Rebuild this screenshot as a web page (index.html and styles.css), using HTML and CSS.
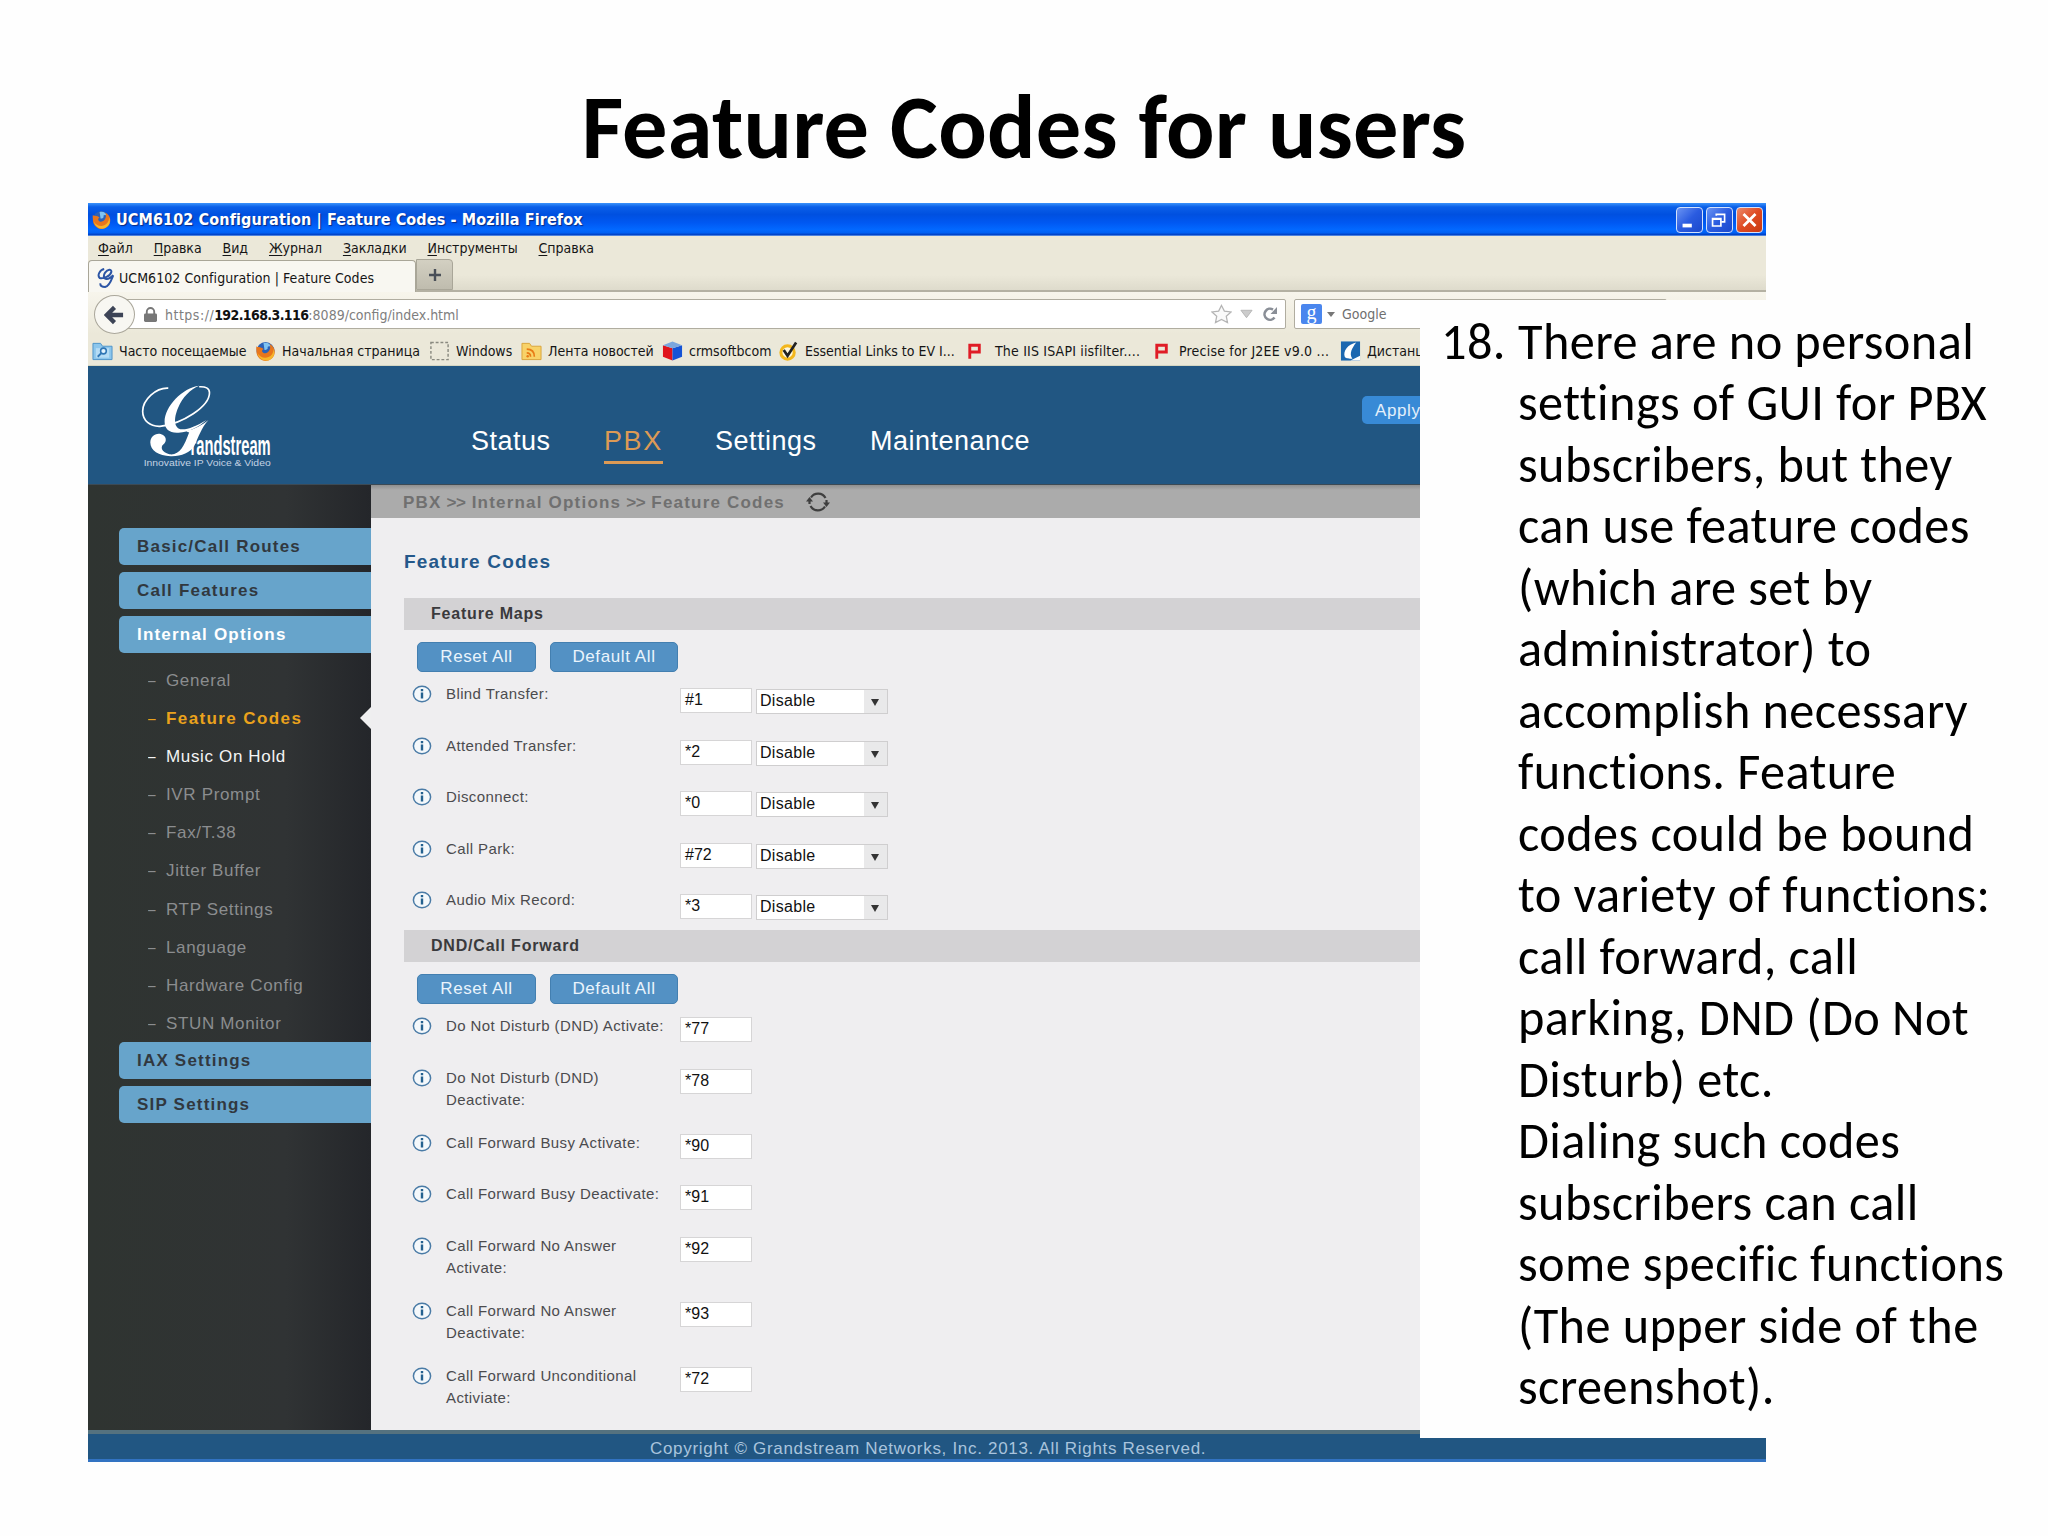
FILE: index.html
```
<!DOCTYPE html>
<html lang="en">
<head>
  <meta charset="UTF-8">
  <meta name="viewport" content="width=device-width, initial-scale=1.0">
  <title>Feature Codes for users</title>
  <link rel="stylesheet" href="styles.css">
</head>
<body>
  <!-- shared icons -->
  <svg class="sprite">
    <symbol id="firefox" viewBox="0 0 20 20">
      <circle cx="10" cy="10" r="9" fill="#2b62b8"/>
      <path d="M8 2c4-1 7 1 8 4-2-1-3-1-4 0 1 2-1 3-3 3z" fill="#7fc4f2"/>
      <path d="M1 5c0 1 1 1 2 1 2 0 4 1 5 2-2 1-2 3 0 4 3 1 5-1 6-3 1-2 1-4 0-6 4 2 6 6 5 10-1 4-5 7-9 7S1 16 1 11c0-2-.6-4 0-6z" fill="#e8761c"/>
      <path d="M2 12c2 4 7 6 11 4 3-1 5-4 5-8 2 5 0 9-4 11-5 2-11-1-12-7z" fill="#f6b52a"/>
    </symbol>
    <symbol id="info" viewBox="0 0 20 18">
      <ellipse cx="10" cy="9" rx="8.6" ry="7.8" fill="#f4f8fb" stroke="#4a7ba6" stroke-width="1.5"/>
      <path d="M10 4v2.2M10 7.500v6" stroke="#24618f" stroke-width="2.400" fill="none"/>
    </symbol>
  </svg>

  <h1 class="slide-title">Feature Codes for users</h1>

  <div class="window">
    <div class="titlebar">
      <svg class="title-icon"><use href="#firefox"/></svg>
      <span class="title-text">UCM6102 Configuration | Feature Codes - Mozilla Firefox</span>
      <span class="win-btn"><svg viewBox="0 0 27 25"><path d="M6 18.5h10" stroke="#fff" stroke-width="4"/></svg></span>
      <span class="win-btn"><svg viewBox="0 0 27 25"><path d="M6 11h9v8H6zM6 11.5h9M10 8V6.500h9v8h-3" stroke="#fff" stroke-width="1.800" fill="none"/></svg></span>
      <span class="win-btn close"><svg viewBox="0 0 27 25"><path d="M7 6l13 13M20 6L7 19" stroke="#fff" stroke-width="3"/></svg></span>
    </div>

    <div class="menubar">
      <span><u>Ф</u>айл</span>
      <span><u>П</u>равка</span>
      <span><u>В</u>ид</span>
      <span><u>Ж</u>урнал</span>
      <span><u>З</u>акладки</span>
      <span><u>И</u>нструменты</span>
      <span><u>С</u>правка</span>
    </div>

    <div class="tabs">
      <div class="tab">
        <svg class="tab-icon" viewBox="0 0 20 22"><path d="M8 1C3 2 0 8 3 11c4 1 12-2 13-7 0-3-4-3-7 1-2 3-2 7 1 7 3 1 6-2 8-4-2 5-4 12-9 13-3 0-6-1-5-4" stroke="#2c55a5" stroke-width="2.200" fill="none"/></svg>
        UCM6102 Configuration | Feature Codes
      </div>
      <div class="new-tab"><svg viewBox="0 0 14 14"><path d="M7 1v12M1 7h12" stroke="#4a5058" stroke-width="2.400"/></svg></div>
    </div>

    <div class="navbar">
      <div class="back"><svg viewBox="0 0 22 20"><path d="M20 10H4M11 2L3 10l8 8" stroke="#3d4456" stroke-width="4.500" fill="none"/></svg></div>
      <div class="urlbar">
        <svg class="lock" viewBox="0 0 14 16"><rect x="0" y="7" width="14" height="9" rx="1.500" fill="#777"/><path d="M3 8V5a4 4 0 0 1 8 0v3" stroke="#777" stroke-width="2" fill="none"/></svg>
        <span class="url"><span class="scheme">https://</span><b>192.168.3.116</b>:8089/config/index.html</span>
        <svg class="star" viewBox="0 0 22 20"><path d="M11 1l3 6 7 .8-5 4.500 1.300 6.700L11 15.700 4.700 19 6 12.300 1 7.800 8 7z" fill="#fafafa" stroke="#b4b4b4" stroke-width="1.300"/></svg>
        <svg class="down" viewBox="0 0 14 10"><path d="M1 1h12L7 9z" fill="#ccc" stroke="#b4b4b4"/></svg>
        <svg class="reload" viewBox="0 0 16 16"><path d="M12.500 11.500A5.500 5.500 0 1 1 11 3.600" stroke="#8a8f97" stroke-width="2.600" fill="none"/><path d="M15 1v7H8.500z" fill="#8a8f97"/></svg>
      </div>
      <div class="searchbar">
        <span class="g-icon">g</span>
        <svg class="g-arrow" viewBox="0 0 8 5"><path d="M0 0h8L4 5z" fill="#777"/></svg>
        <span>Google</span>
      </div>
    </div>

    <div class="bookmarks">
      <svg viewBox="0 0 22 20"><path d="M1 2h8l2 3h10v14H1z" fill="#8cc6ec" stroke="#4d93c8"/><path d="M4 7h14v10H4z" fill="#b5dcf5"/><circle cx="12" cy="10" r="3" stroke="#2f76b5" stroke-width="1.600" fill="#e2f3fd"/><path d="M10 12l-4 4" stroke="#2f76b5" stroke-width="2"/></svg>
      <span class="bm bm-often">Часто посещаемые</span>
      <svg><use href="#firefox"/></svg>
      <span class="bm bm-home">Начальная страница</span>
      <svg viewBox="0 0 22 20"><rect x="2" y="1" width="18" height="18" fill="none" stroke="#8a8a80" stroke-width="1.500" stroke-dasharray="3 2"/></svg>
      <span class="bm bm-win">Windows</span>
      <svg viewBox="0 0 22 20"><path d="M1 2h8l2 3h10v14H1z" fill="#f8d268" stroke="#d9a43a"/><path d="M6 8c5 0 8 3 8 8M6 12c2.500 0 4 1.500 4 4" stroke="#e87a15" stroke-width="1.700" fill="none"/><circle cx="7" cy="15.500" r="1.300" fill="#e87a15"/></svg>
      <span class="bm bm-rss">Лента новостей</span>
      <svg viewBox="0 0 22 20"><path d="M1 4l10 3v13L1 16z" fill="#e0141b"/><path d="M11 7l10-3v12l-10 4z" fill="#1453d6"/><path d="M1 4l10-4 10 4-10 3z" fill="#7ba6dd"/></svg>
      <span class="bm bm-crm">crmsoftbcom</span>
      <svg viewBox="0 0 22 20"><circle cx="10" cy="11.500" r="7" stroke="#f3b71d" stroke-width="3.200" fill="#fdf7e0"/><path d="M6 9l4 6 9-14" stroke="#222" stroke-width="2.800" fill="none"/></svg>
      <span class="bm bm-ev">Essential Links to EV I...</span>
      <svg viewBox="0 0 22 20"><path d="M5 18V4h10v7H5" stroke="#e01c26" stroke-width="3" fill="none"/></svg>
      <span class="bm bm-iis">The IIS ISAPI iisfilter....</span>
      <svg viewBox="0 0 22 20"><path d="M5 18V4h10v7H5" stroke="#e01c26" stroke-width="3" fill="none"/></svg>
      <span class="bm bm-precise">Precise for J2EE v9.0 ...</span>
      <svg viewBox="0 0 22 20"><rect x="1" width="20" height="20" fill="#1b67b0"/><path d="M17 1C8 3 3 10 5 16c1 2 5 2 8 2-4-5 0-12 4-17z" fill="#fff"/><path d="M11 20l10-5v5z" fill="#fff"/></svg>
      <span class="bm">Дистанц</span>
    </div>

    <div class="header">
      <svg class="logo" viewBox="160 55 400 255">
        <path d="M242 70C205 68 165 105 165 140c0 28 22 46 52 45C285 178 366 125 366 84c0-14-12-19-31-18" fill="none" stroke="#fff" stroke-width="5"/>
        <path d="M335 63c-50 6-104 62-104 109 0 22 16 34 42 32 32-2 60-16 84-38-30 18-56 29-74 28-24-2-26-32-11-66 13-30 36-54 63-65z" fill="#fff"/>
        <path d="M363 166c-22 24-29 50-42 76-13 24-42 34-72 33-36-1-61-17-61-41 0-18 14-29 31-26 17 4 21 22 8 32-10 8-4 24 18 29 30 4 44-22 60-66-5 0-8-3-8-5 26-4 45-16 66-32z" fill="#fff"/>
        <text x="309" y="271" textLength="241" lengthAdjust="spacingAndGlyphs" class="logo-name">randstream</text>
        <text x="168" y="303" textLength="382" lengthAdjust="spacingAndGlyphs" class="logo-tag">Innovative IP Voice &amp; Video</text>
      </svg>
      <div class="nav">
        <a class="nav-status">Status</a>
        <a class="nav-pbx active">PBX</a>
        <a class="nav-settings">Settings</a>
        <a>Maintenance</a>
      </div>
      <div class="apply">Apply</div>
    </div>

    <div class="main">
      <div class="sidebar">
        <div class="group">Basic/Call Routes</div>
        <div class="group">Call Features</div>
        <div class="group open">Internal Options</div>
        <ul class="submenu">
          <li>General</li>
          <li class="current">Feature Codes</li>
          <li class="hover">Music On Hold</li>
          <li>IVR Prompt</li>
          <li>Fax/T.38</li>
          <li>Jitter Buffer</li>
          <li>RTP Settings</li>
          <li>Language</li>
          <li>Hardware Config</li>
          <li>STUN Monitor</li>
        </ul>
        <div class="group">IAX Settings</div>
        <div class="group">SIP Settings</div>
      </div>

      <div class="content">
        <div class="breadcrumb">
          <span>PBX <i>&gt;&gt;</i> Internal Options <i>&gt;&gt;</i> Feature Codes</span>
          <svg viewBox="0 0 24 20"><path d="M5 5.500A8.500 8.500 0 0 1 19.500 6M19 14.500A8.500 8.500 0 0 1 4.500 14M3.500 12V9M20.500 8v3" stroke="#3f3f3f" stroke-width="2.200" fill="none"/><path d="M0 9.500h7L3.500 5zM17 10.500h7L20.500 15z" fill="#3f3f3f"/></svg>
        </div>
        <h2>Feature Codes</h2>

        <div class="band">Feature Maps</div>
        <div class="buttons"><span class="btn reset">Reset All</span><span class="btn default">Default All</span></div>
        <div class="rows maps">
          <div class="row"><svg class="info"><use href="#info"/></svg><span class="label">Blind Transfer:</span><span class="code">#1</span><span class="select">Disable</span></div>
          <div class="row"><svg class="info"><use href="#info"/></svg><span class="label">Attended Transfer:</span><span class="code">*2</span><span class="select">Disable</span></div>
          <div class="row"><svg class="info"><use href="#info"/></svg><span class="label">Disconnect:</span><span class="code">*0</span><span class="select">Disable</span></div>
          <div class="row"><svg class="info"><use href="#info"/></svg><span class="label">Call Park:</span><span class="code">#72</span><span class="select">Disable</span></div>
          <div class="row"><svg class="info"><use href="#info"/></svg><span class="label">Audio Mix Record:</span><span class="code">*3</span><span class="select">Disable</span></div>
        </div>

        <div class="band">DND/Call Forward</div>
        <div class="buttons"><span class="btn reset">Reset All</span><span class="btn default">Default All</span></div>
        <div class="rows dnd">
          <div class="row"><svg class="info"><use href="#info"/></svg><span class="label">Do Not Disturb (DND) Activate:</span><span class="code">*77</span></div>
          <div class="row"><svg class="info"><use href="#info"/></svg><span class="label">Do Not Disturb (DND)<br>Deactivate:</span><span class="code">*78</span></div>
          <div class="row"><svg class="info"><use href="#info"/></svg><span class="label">Call Forward Busy Activate:</span><span class="code">*90</span></div>
          <div class="row"><svg class="info"><use href="#info"/></svg><span class="label">Call Forward Busy Deactivate:</span><span class="code">*91</span></div>
          <div class="row"><svg class="info"><use href="#info"/></svg><span class="label">Call Forward No Answer<br>Activate:</span><span class="code">*92</span></div>
          <div class="row"><svg class="info"><use href="#info"/></svg><span class="label">Call Forward No Answer<br>Deactivate:</span><span class="code">*93</span></div>
          <div class="row"><svg class="info"><use href="#info"/></svg><span class="label">Call Forward Unconditional<br>Activiate:</span><span class="code">*72</span></div>
        </div>
      </div>
    </div>

    <div class="footer">Copyright © Grandstream Networks, Inc. 2013. All Rights Reserved.</div>
  </div>

  <!-- slide note, lies over the right part of the window -->
  <div class="note">
    <span class="num">18.</span>
    <p>There are no personal<br>settings of GUI for PBX<br>subscribers, but they<br>can use feature codes<br>(which are set by<br>administrator) to<br>accomplish necessary<br>functions. Feature<br>codes could be bound<br>to variety of functions:<br>call forward, call<br>parking, DND (Do Not<br>Disturb) etc.<br>Dialing such codes<br>subscribers can call<br>some specific functions<br>(The upper side of the<br>screenshot).</p>
  </div>
</body>
</html>
```
FILE: styles.css
```
* {
  box-sizing: border-box;
}

body {
  margin: 0;
  width: 2048px;
  height: 1536px;
  background: #fefefe;
  position: relative;
  overflow: hidden;
  font-family: "Liberation Sans", Arial, sans-serif;
}

.sprite {
  display: none;
}

.slide-title {
  margin: 0;
  height: 203px;
  padding-top: 72px;
  text-align: center;
  font: bold 90.4px/110px Carlito, Calibri, Lato, sans-serif;
  letter-spacing: 0.25px;
  font-variant-ligatures: none;
  color: #000;
}

/* Browser window */
.window {
  width: 1678px;
  height: 1259px;
  margin-left: 88px;
  display: flex;
  flex-direction: column;
  background: #ebe8d9;
  font: 14px "DejaVu Sans Condensed", "DejaVu Sans", sans-serif;
  color: #151515;
}

.titlebar {
  height: 33px;
  padding: 0 3px 0 4px;
  display: flex;
  align-items: center;
  background: linear-gradient(#3b93fb 0%, #0a5fe8 12%, #0050e0 35%, #0058f2 60%, #0268ff 80%, #0060f4 90%, #0141c4 96%, #7aa9ee 100%);
}

.title-icon {
  width: 19px;
  height: 19px;
  margin-right: 5px;
}

.title-text {
  flex: 1;
  font-size: 16px;
  font-weight: bold;
  letter-spacing: 0.12px;
  color: #fff;
  text-shadow: 1px 1px 1px #0a2a80;
}

.win-btn {
  width: 27px;
  height: 26px;
  margin-left: 3px;
  border: 1.5px solid #d4e2fb;
  border-radius: 4px;
  background: linear-gradient(135deg, #6a94f3, #2a5be0 50%, #1b49cc);
}

.win-btn svg {
  display: block;
  width: 100%;
  height: 100%;
}

.close {
  background: linear-gradient(135deg, #ec8a6c, #df4a22 50%, #c93a12);
}

.menubar {
  height: 24px;
  padding-left: 10px;
  display: flex;
  gap: 20.9px;
  line-height: 24px;
}

.menubar u {
  text-underline-offset: 2px;
}

.tabs {
  height: 32px;
  display: flex;
  align-items: flex-end;
  background: linear-gradient(#ebe8d9 50%, #dedbcc);
  border-bottom: 2px solid #b4b1a3;
}

.tab {
  width: 328px;
  height: 32px;
  margin-bottom: -2px;
  padding: 2px 0 0 8px;
  display: flex;
  align-items: center;
  border: 1.5px solid #a9a698;
  border-bottom: 0;
  border-radius: 4px 4px 0 0;
  background: #f8f7f1;
  letter-spacing: 0.06px;
}

.tab-icon {
  width: 18px;
  height: 20px;
  margin-right: 4px;
}

.new-tab {
  width: 37px;
  height: 31px;
  display: flex;
  align-items: center;
  justify-content: center;
  border: 1.5px solid #a9a698;
  border-radius: 0 4px 0 0;
  background: linear-gradient(#d3d0c2, #bfbcae);
}

.new-tab svg {
  width: 14px;
  height: 14px;
}

.navbar {
  height: 42px;
  padding: 3px 0 0 6px;
  display: flex;
  background: linear-gradient(#f7f5ec, #ebe8d9);
}

.back {
  width: 41px;
  height: 39px;
  z-index: 1;
  display: flex;
  align-items: center;
  justify-content: center;
  border: 1.5px solid #aaa79b;
  border-radius: 50%;
  background: #f8f7f2;
}

.back svg {
  width: 21px;
  height: 20px;
}

.urlbar {
  width: 1167px;
  height: 30px;
  margin: 4px 0 0 -16px;
  padding: 0 7px 0 24px;
  display: flex;
  align-items: center;
  border: 1.5px solid #b0ada0;
  border-radius: 2px;
  background: #fff;
  color: #7e7e7e;
}

.lock {
  width: 13px;
  height: 15px;
  margin-right: 8px;
}

.url {
  flex: 1;
  padding-top: 1px;
}

.url b {
  color: #111;
  letter-spacing: -0.6px;
}

.scheme {
  letter-spacing: 0.5px;
}

.star {
  width: 21px;
  height: 20px;
}

.down {
  width: 13px;
  height: 10px;
  margin: 0 9px 0 8px;
}

.reload {
  width: 16px;
  height: 16px;
}

.searchbar {
  width: 373px;
  height: 30px;
  margin: 4px 0 0 8px;
  padding-left: 6px;
  display: flex;
  align-items: center;
  border: 1.5px solid #b0ada0;
  border-radius: 2px;
  background: #fff;
  color: #6f6f6f;
}

.g-icon {
  width: 21px;
  height: 20px;
  border-radius: 2px;
  background: #4a86ee;
  color: #fff;
  font: 20px/16px "Liberation Serif", serif;
  text-align: center;
}

.g-arrow {
  width: 8px;
  height: 5px;
  margin: 0 7px 0 5px;
}

.bookmarks {
  height: 32px;
  padding: 2px 0 0 4px;
  display: flex;
  align-items: center;
  white-space: nowrap;
  overflow: hidden;
  border-bottom: 1.5px solid #d5d6c2;
}

.bookmarks svg {
  flex: none;
  width: 21px;
  height: 20px;
  margin-right: 6px;
}

.bm {
  flex: none;
  margin-right: 8px;
}

.bm-often { width: 128px; }
.bm-home { width: 139px; }
.bm-win { width: 57px; }
.bm-rss { width: 106px; }
.bm-crm { width: 81px; }
.bm-ev { width: 152px; }
.bm-iis { width: 149px; margin-left: 3px; letter-spacing: 0.18px; }
.bm-precise { width: 153px; letter-spacing: 0.2px; }

/* Grandstream web GUI */
.header {
  height: 119px;
  padding-left: 53px;
  display: flex;
  background: #215682;
  border-bottom: 1.5px solid #3c4a55;
  font-family: "Liberation Sans", Arial, sans-serif;
}

.logo {
  width: 133px;
  height: 85px;
  margin-top: 17px;
  overflow: visible;
}

.logo-name {
  font: bold 82px "Liberation Sans", sans-serif;
  fill: #fff;
}

.logo-tag {
  font: 28px "Liberation Sans", sans-serif;
  fill: #c3d2e2;
}

.nav {
  flex: 1;
  padding: 57px 0 0 197px;
  display: flex;
  align-items: flex-start;
  font-size: 27px;
  line-height: 36px;
  letter-spacing: 0.5px;
  color: #fff;
}

.nav-status {
  width: 133px;
}

.nav-pbx {
  width: 59px;
  height: 41px;
  margin-right: 52px;
  letter-spacing: 1.6px;
}

.active {
  color: #dc9a55;
  border-bottom: 3px solid #dc9a55;
}

.nav-settings {
  width: 155px;
}

.apply {
  width: 404px;
  height: 28px;
  margin-top: 30px;
  padding-left: 13px;
  border-radius: 5px;
  background: #388ad6;
  font-size: 17px;
  line-height: 30px;
  letter-spacing: 0.6px;
  color: #e4f0fb;
}

.main {
  height: 945px;
  display: flex;
  font-family: "Liberation Sans", Arial, sans-serif;
}

.sidebar {
  width: 283px;
  padding: 43px 0 0 31px;
  background: linear-gradient(90deg, #2f3431, #303334 70%, #24262a);
  font-size: 17px;
}

.group {
  height: 37px;
  margin-bottom: 7px;
  padding-left: 18px;
  border-radius: 5px 0 0 5px;
  background: #67a4cb;
  font-weight: bold;
  line-height: 37px;
  letter-spacing: 1.2px;
  color: #31383f;
}

.open {
  margin-bottom: 8px;
  color: #fff;
}

.submenu {
  margin: 0;
  padding: 0;
  list-style: none;
  letter-spacing: 0.65px;
  color: #8b8d8f;
}

.submenu li {
  height: 38.1px;
  padding-left: 29px;
  line-height: 39px;
}

.submenu li::before {
  content: "–";
  display: inline-block;
  width: 18px;
  font-weight: normal;
  transform: scaleX(0.8);
  transform-origin: left;
}

.submenu .current {
  font-weight: bold;
  letter-spacing: 1.4px;
  color: #eaa21c;
  position: relative;
}

/* white pointer towards the content */
.current::after {
  content: "";
  position: absolute;
  right: 0;
  top: 8px;
  border: 11px solid transparent;
  border-right-color: #efeff0;
  border-left: 0;
}

.submenu .hover {
  color: #f4f4f4;
}

.content {
  flex: 1;
  background: #efeef0;
}

.breadcrumb {
  height: 33px;
  padding: 2px 0 0 32px;
  display: flex;
  align-items: center;
  background: linear-gradient(#8f8f8f, #ababab 15%);
  font-size: 17px;
  font-weight: bold;
  letter-spacing: 1.2px;
  color: #707070;
}

.breadcrumb i {
  margin-left: -1px;
  font-style: normal;
  letter-spacing: -0.3px;
}

.breadcrumb svg {
  width: 24px;
  height: 20px;
  margin: -2px 0 0 21px;
}

h2 {
  margin: 31px 0 23px 33px;
  font-size: 19px;
  line-height: 26px;
  letter-spacing: 1.17px;
  color: #24588a;
}

.band {
  height: 32px;
  margin-left: 33px;
  padding-left: 27px;
  background: #d3d2d4;
  font-size: 16px;
  font-weight: bold;
  line-height: 32px;
  letter-spacing: 0.8px;
  color: #3a3a3c;
}

.buttons {
  padding: 12px 0 0 46px;
  display: flex;
  gap: 14px;
}

.btn {
  height: 30px;
  border: 1px solid #437fb0;
  border-radius: 5px;
  background: #5391c4;
  font-size: 17px;
  line-height: 28px;
  letter-spacing: 0.6px;
  text-align: center;
  color: #eaf4fc;
}

.reset { width: 119px; }
.default { width: 128px; }

.rows {
  padding-left: 41px;
  font-size: 15px;
}

.maps {
  height: 258px;
  padding-top: 11px;
}

.dnd {
  padding-top: 11px;
}

.row {
  min-height: 51.6px;
  padding-bottom: 21.2px;
  display: flex;
  align-items: flex-start;
}

.maps .row {
  padding-bottom: 0;
}

.info {
  width: 20px;
  height: 18px;
  margin: 2px 14px 0 0;
}

.label {
  width: 234px;
  line-height: 22px;
  letter-spacing: 0.4px;
  color: #4b4b4e;
}

.code {
  width: 72px;
  height: 25px;
  margin-top: 5px;
  padding-left: 4px;
  border: 1.5px solid #d6d5d6;
  background: #fff;
  font-size: 16px;
  line-height: 22px;
  color: #111;
}

.dnd .code {
  margin-top: 2px;
}

.select {
  width: 132px;
  height: 25px;
  margin: 6px 0 0 4px;
  padding-left: 3px;
  display: flex;
  justify-content: space-between;
  border: 1.5px solid #cfcecf;
  background: linear-gradient(90deg, #fff 107px, #e9e9ea 107px);
  font-size: 16px;
  line-height: 22px;
  letter-spacing: 0.3px;
  color: #111;
}

.select::after {
  content: "";
  height: 0;
  margin: 9px 8px 0 0;
  border: 4px solid transparent;
  border-top: 7px solid #333;
  border-bottom: 0;
}

.footer {
  height: 32px;
  padding-left: 562px;
  border-top: 4px solid #55727f;
  border-bottom: 3px solid #3273c2;
  background: #215682;
  font: 17px/29px "Liberation Sans", Arial, sans-serif;
  letter-spacing: 0.69px;
  color: #a9c4dd;
}

/* Slide note */
.note {
  position: absolute;
  left: 1420px;
  top: 300px;
  width: 628px;
  height: 1138px;
  padding: 12px 0 0 21px;
  display: flex;
  background: #fefefe;
  font: 50.3px/61.48px Carlito, Calibri, Lato, sans-serif;
  letter-spacing: 0.42px;
  font-variant-ligatures: none;
  color: #000;
  white-space: nowrap;
}

.num {
  width: 77px;
}

.note p {
  margin: 0;
}
```
